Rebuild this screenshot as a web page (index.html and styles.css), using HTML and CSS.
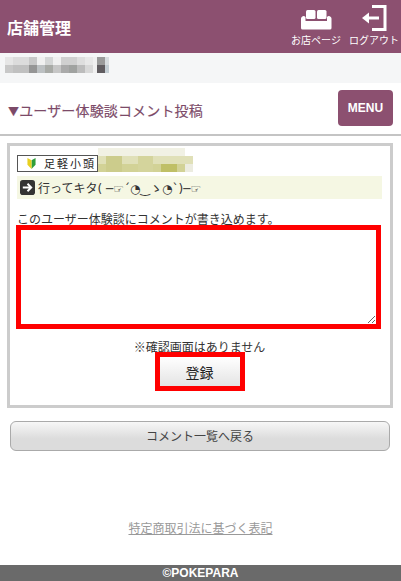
FILE: index.html
```html
<!DOCTYPE html>
<html lang="ja">
<head>
  <meta charset="UTF-8" />
  <meta name="viewport" content="width=device-width, initial-scale=1.0"/>
  <title>店舗管理</title>
  <link rel="stylesheet" href="styles.css">
</head>
<body>
  <header class="site-header">
    <div class="site-title">店舗管理</div>
    <nav class="header-nav">
      <a class="nav-item" href="#">
        <svg class="nav-icon" width="32" height="22" viewBox="0 0 32 22" aria-hidden="true">
          <rect x="6" y="1" width="9.500" height="9" rx="1.500" fill="#fff"/>
          <rect x="17" y="1" width="9.500" height="9" rx="1.500" fill="#fff"/>
          <path d="M1 9.500a2.500 2.500 0 0 1 4.500-1.500V12h21.500V8a2.500 2.500 0 0 1 4.500 1.500V19a1.500 1.500 0 0 1-1.500 1.500H2.500A1.500 1.500 0 0 1 1 19z" fill="#fff"/>
        </svg>
        <span>お店ページ</span>
      </a>
      <a class="nav-item" href="#">
        <svg class="nav-icon" width="26" height="26" viewBox="0 0 26 26" aria-hidden="true">
          <path d="M11 1.500h13v23H11" fill="none" stroke="#fff" stroke-width="3"/>
          <path d="M18 13H5" fill="none" stroke="#fff" stroke-width="3"/>
          <path d="M8 7.500L1 13l7 5.500z" fill="#fff"/>
        </svg>
        <span>ログアウト</span>
      </a>
    </nav>
  </header>

  <div class="shop-bar">
    <!-- モザイク -->
    <svg width="104" height="16" viewBox="0 0 13 2" shape-rendering="crispEdges" aria-hidden="true">
      <rect width="13" height="2" fill="#f0f0f0"/>
      <rect x="0" y="0" width="1" height="1" fill="#e6e6e6"/><rect x="1" y="0" width="2" height="1" fill="#dcdcdc"/>
      <rect x="3" y="0" width="1" height="1" fill="#c8c8c8"/><rect x="5" y="0" width="1" height="1" fill="#d4d6d6"/>
      <rect x="7" y="0" width="2" height="1" fill="#d0d0d0"/><rect x="9" y="0" width="1" height="1" fill="#dedede"/>
      <rect x="10" y="0" width="1" height="1" fill="#e8e8e8"/><rect x="11.500" y="0" width="1" height="1" fill="#9a9a9a"/>
      <rect x="12.500" y="0" width="0.500" height="1" fill="#d8dde0"/>
      <rect x="0" y="1" width="1" height="1" fill="#c8c8c8"/><rect x="1" y="1" width="2" height="1" fill="#c0c0c0"/>
      <rect x="3" y="1" width="1" height="1" fill="#959595"/><rect x="4" y="1" width="1" height="1" fill="#bcc0c2"/>
      <rect x="5" y="1" width="1" height="1" fill="#a8aaa6"/><rect x="6" y="1" width="1" height="1" fill="#c6c6c6"/>
      <rect x="7" y="1" width="1" height="1" fill="#aaa"/><rect x="8" y="1" width="1" height="1" fill="#a0a2a0"/>
      <rect x="9" y="1" width="1" height="1" fill="#bcbcbc"/><rect x="10" y="1" width="1" height="1" fill="#d8d8d8"/>
      <rect x="11.500" y="1" width="1" height="1" fill="#605c60"/><rect x="12.500" y="1" width="0.500" height="1" fill="#c4ced4"/>
    </svg>
  </div>

  <div class="page-head">
    <h1 class="page-title"><span class="title-mark">▼</span>ユーザー体験談コメント投稿</h1>
    <button class="menu-btn" type="button">MENU</button>
  </div>

  <section class="post-panel">
    <div class="user-line">
      <span class="rank-badge">
        <svg width="9" height="13" viewBox="0 0 10 14" aria-hidden="true">
          <path d="M5 3.500L9.500 1v7.500L5 13z" fill="#2f9e3a"/>
          <path d="M5 3.500L0.500 1v7.500L5 13z" fill="#e8d020"/>
        </svg>
        <span class="rank-name">足軽小頭</span>
      </span>
      <svg class="user-mosaic" width="95" height="24" viewBox="0 0 12 3" shape-rendering="crispEdges" aria-hidden="true">
        <rect y="0" width="11" height="1" fill="#f1f1e4"/>
        <rect y="1" width="12" height="1" fill="#e0e0b8"/>
        <rect y="2" width="12" height="1" fill="#d2d296"/>
        <rect x="1" y="1" width="2" height="2" fill="#cccc8c"/>
        <rect x="5" y="1" width="2" height="2" fill="#d4d49c"/>
        <rect x="8" y="2" width="2" height="1" fill="#bfbf66"/>
        <rect x="11" y="2" width="1" height="1" fill="#ecece0"/>
      </svg>
    </div>

    <div class="comment-title">
      <svg width="15" height="15" viewBox="0 0 16 16" aria-hidden="true">
        <rect width="16" height="16" rx="3" fill="#333"/>
        <path d="M3 8h8M8 4l4 4-4 4" fill="none" stroke="#fff" stroke-width="2"/>
      </svg>
      <span>行ってキタ<span class="kaomoji">( ─☞´◔‿ゝ◔`)─☞</span></span>
    </div>

    <p class="form-note">このユーザー体験談にコメントが書き込めます。</p>
    <textarea class="comment-input"></textarea>
    <p class="confirm-note">※確認画面はありません</p>
    <button class="submit-btn" type="button">登録</button>
  </section>

  <a class="back-btn" href="#">コメント一覧へ戻る</a>

  <a class="legal-link" href="#">特定商取引法に基づく表記</a>

  <footer class="site-footer">©POKEPARA</footer>
</body>
</html>
```

FILE: styles.css
```css
* {
  margin: 0;
  padding: 0;
  box-sizing: border-box;
}

body {
  font-family: "Noto Sans CJK JP", "Noto Sans", sans-serif;
  font-size: 12px;
  color: #333;
  background: #fff;
  height: 581px;
  display: flex;
  flex-direction: column;
  overflow: hidden;
}

a {
  color: inherit;
}

.site-header {
  height: 53px;
  background: #8c5070;
  color: #fff;
  display: flex;
  align-items: center;
  justify-content: space-between;
  padding: 0 2px 0 7px;
}

.site-title {
  font-size: 16px;
  font-weight: bold;
}

.header-nav {
  display: flex;
  gap: 8px;
  margin-bottom: 5px;
}

.nav-item {
  width: 50px;
  height: 46px;
  display: flex;
  flex-direction: column;
  align-items: center;
  justify-content: flex-end;
  font-size: 10px;
  line-height: 14px;
  text-decoration: none;
  white-space: nowrap;
}

.nav-icon {
  margin-bottom: 2px;
}

.shop-bar {
  height: 30px;
  background: #f5f6f7;
  padding: 4px 0 0 5px;
}

.shop-bar svg {
  display: block;
}

.page-head {
  height: 53px;
  border-bottom: 2px solid #c4c4c4;
  display: flex;
  align-items: center;
  justify-content: space-between;
  padding: 3px 8px 0 8px;
}

.page-title {
  font-size: 14px;
  font-weight: normal;
  letter-spacing: 0.15px;
  color: #7c4a68;
  -webkit-text-stroke: 0.15px #7c4a68;
}

.title-mark {
  font-size: 11px;
}

.menu-btn {
  width: 55px;
  height: 36px;
  margin-top: -4px;
  border: none;
  border-radius: 4px;
  background: #8c5070;
  color: #fff;
  font-family: "Liberation Sans", sans-serif;
  font-size: 12px;
  font-weight: bold;
}

.post-panel {
  margin: 7px 8px 0 7px;
  height: 265px;
  border: 3px solid #ccc;
  padding: 9px 8px 0 7px;
  display: flex;
  flex-direction: column;
  align-items: flex-start;
}

.user-line {
  height: 17px;
  display: flex;
  align-items: flex-end;
}

.rank-badge {
  width: 81px;
  height: 17px;
  border: 1px solid #555;
  display: flex;
  align-items: center;
  gap: 8px;
  padding-left: 9px;
  background: #fff;
}

.rank-name {
  font-size: 11px;
  line-height: 15px;
  letter-spacing: 2px;
  color: #222;
  white-space: nowrap;
}

.user-mosaic {
  flex: none;
}

.comment-title {
  align-self: stretch;
  height: 23px;
  margin-top: 4px;
  padding-left: 3px;
  background: #f5f7e3;
  display: flex;
  align-items: center;
  gap: 3px;
  font-size: 12px;
  white-space: nowrap;
}

.kaomoji {
  font-family: "DejaVu Sans", "Noto Sans CJK JP", sans-serif;
  font-size: 12px;
}

.form-note {
  margin-top: 11px;
  line-height: 18px;
  white-space: nowrap;
}

.comment-input {
  display: block;
  width: 365px;
  height: 104px;
  margin: -3px 0 0 -1px;
  border: 5px solid #f00;
  background: #fff;
  position: relative;
}

.confirm-note {
  align-self: center;
  margin-top: 10px;
  line-height: 16px;
}

.submit-btn {
  align-self: center;
  width: 90px;
  height: 39px;
  margin-top: -3px;
  border: 5px solid #f00;
  background: linear-gradient(#fff, #e4e4e4);
  font-family: inherit;
  font-size: 14px;
  color: #222;
  position: relative;
}

.back-btn {
  display: block;
  margin: 13px 11px 0 10px;
  height: 30px;
  border: 1px solid #aaa;
  border-radius: 6px;
  background: linear-gradient(#f7f7f7, #dcdcdc 60%);
  font-size: 12px;
  line-height: 28px;
  text-align: center;
  text-decoration: none;
  color: #444;
}

.legal-link {
  align-self: center;
  margin-top: 68px;
  color: #999;
  line-height: 18px;
}

.site-footer {
  margin-top: auto;
  height: 16px;
  background: #6a6a6a;
  color: #fff;
  font-family: "Liberation Sans", sans-serif;
  font-size: 12px;
  font-weight: bold;
  line-height: 16px;
  text-align: center;
}
```
